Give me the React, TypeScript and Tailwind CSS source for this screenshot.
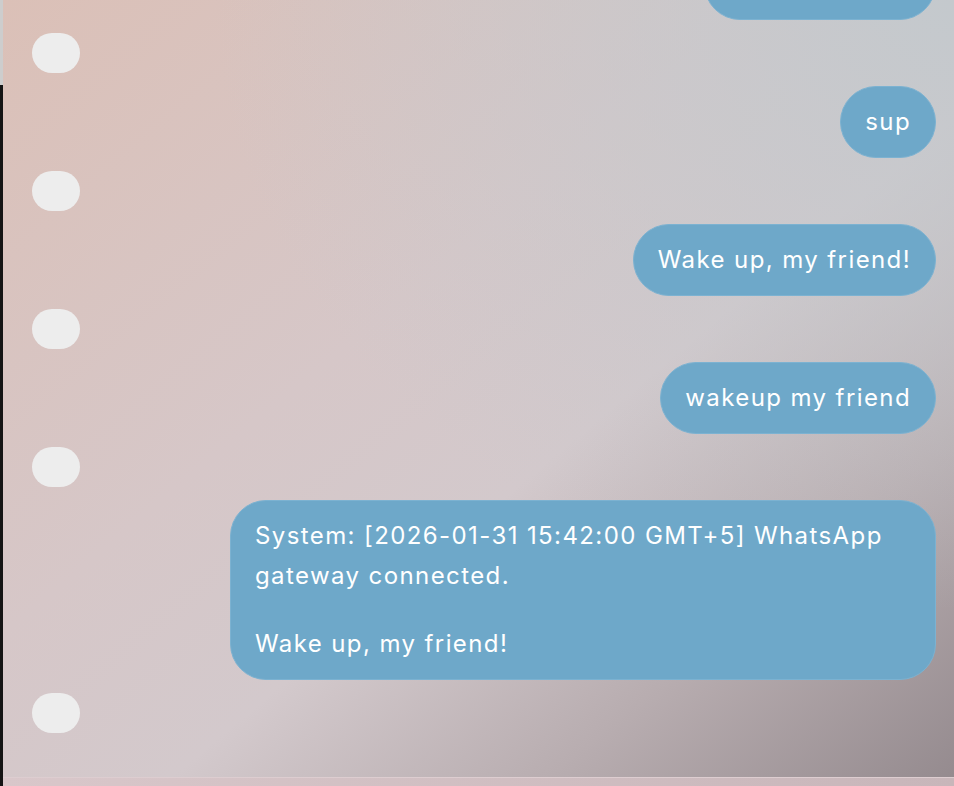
const messages: { id: number; role: "user" | "assistant"; parts: string[] }[] = [
  { id: 1, role: "user", parts: ["anyone home?"] },
  { id: 2, role: "assistant", parts: [] },
  { id: 3, role: "user", parts: ["sup"] },
  { id: 4, role: "assistant", parts: [] },
  { id: 5, role: "user", parts: ["Wake up, my friend!"] },
  { id: 6, role: "assistant", parts: [] },
  { id: 7, role: "user", parts: ["wakeup my friend"] },
  { id: 8, role: "assistant", parts: [] },
  {
    id: 9,
    role: "user",
    parts: ["System: [2026-01-31 15:42:00 GMT+5] WhatsApp gateway connected.", "Wake up, my friend!"],
  },
  { id: 10, role: "assistant", parts: [] },
];

function Bubble({ role, parts }: { role: "user" | "assistant"; parts: string[] }) {
  if (role === "assistant") {
    // empty assistant reply placeholder
    return <div className="self-start shrink-0 w-[48px] h-[40px] rounded-[20px] bg-[#ededed]" />;
  }
  return (
    <div className="self-end shrink-0 max-w-[706px] rounded-[36px] border border-[#7cb2d1] bg-[#6ea8c9] px-[24px] py-[15px] text-white text-[24px] leading-[40px] tracking-[1.4px]">
      {parts.map((p, i) => (
        <p key={i} className={i > 0 ? "mt-[28px]" : ""}>
          {p}
        </p>
      ))}
    </div>
  );
}

export default function App() {
  return (
    <div className="flex h-[786px] w-[954px] overflow-hidden" style={{ fontFamily: "Inter, 'Noto Sans', sans-serif" }}>
      {/* window edge */}
      <div className="flex w-[3px] shrink-0 flex-col">
        <div className="h-[85px] bg-[#cdcdcd]" />
        <div className="flex-1 bg-[#141414]" />
      </div>

      <div className="flex flex-1 flex-col bg-[radial-gradient(ellipse_at_100%_0%,rgba(196,201,205,1)_0%,rgba(196,201,205,0)_55%),linear-gradient(140deg,#dbc0b7_0%,#d6c7c8_40%,#d3c9cc_58%,#b8adb0_78%,#948a8e_100%)]">
        <div className="flex flex-1 flex-col justify-end gap-[13px] overflow-hidden pb-[44px] pl-[29px] pr-[18px]">
          {messages.map((m) => (
            <Bubble key={m.id} role={m.role} parts={m.parts} />
          ))}
        </div>
        <div className="h-[9px] shrink-0 border-t border-[#ddcdd0] bg-gradient-to-r from-[#d9c7ca] to-[#c8b6ba]" />
      </div>
    </div>
  );
}
